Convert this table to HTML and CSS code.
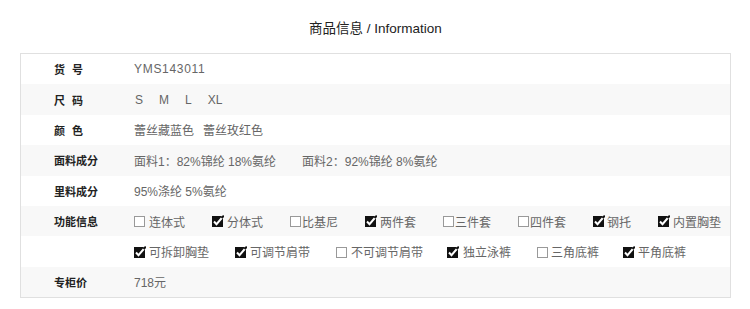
FILE: index.html
```html
<!DOCTYPE html>
<html lang="zh-CN">
<head>
<meta charset="utf-8">
<title>商品信息</title>
<link rel="stylesheet" href="styles.css">
</head>
<body>
<div class="page">
  <h1 class="title">商品信息 / Information</h1>
  <div class="table">
    <div class="row">
      <div class="label spaced">货 号</div>
      <div class="value code">YMS143011</div>
    </div>
    <div class="row alt">
      <div class="label spaced">尺 码</div>
      <div class="value sizes"><span>S</span><span>M</span><span>L</span><span>XL</span></div>
    </div>
    <div class="row">
      <div class="label spaced">颜 色</div>
      <div class="value pair"><span>蕾丝藏蓝色</span><span>蕾丝玫红色</span></div>
    </div>
    <div class="row alt">
      <div class="label">面料成分</div>
      <div class="value pair wide"><span>面料1：82%锦纶 18%氨纶</span><span>面料2：92%锦纶 8%氨纶</span></div>
    </div>
    <div class="row">
      <div class="label">里料成分</div>
      <div class="value">95%涤纶 5%氨纶</div>
    </div>
    <div class="row alt">
      <div class="label">功能信息</div>
      <div class="value checks">
        <span class="opt"><svg class="cb" viewBox="0 0 12 12"><rect x="0.5" y="1.5" width="10" height="10" fill="#fff" stroke="#999"/></svg><span class="t g13">连体式</span></span>
        <span class="opt"><svg class="cb" viewBox="0 0 12 12"><rect x="0" y="1" width="11" height="11" fill="#111"/><path d="M2 6.5 L4.5 9.2 L11.8 0.6" fill="none" stroke="#fff" stroke-width="2"/><path d="M9.6 3.2 L11.8 0.6" fill="none" stroke="#111" stroke-width="2"/></svg><span class="t g13">分体式</span></span>
        <span class="opt"><svg class="cb" viewBox="0 0 12 12"><rect x="0.5" y="1.5" width="10" height="10" fill="#fff" stroke="#999"/></svg><span class="t g10">比基尼</span></span>
        <span class="opt"><svg class="cb" viewBox="0 0 12 12"><rect x="0" y="1" width="11" height="11" fill="#111"/><path d="M2 6.5 L4.5 9.2 L11.8 0.6" fill="none" stroke="#fff" stroke-width="2"/><path d="M9.6 3.2 L11.8 0.6" fill="none" stroke="#111" stroke-width="2"/></svg><span class="t g13">两件套</span></span>
        <span class="opt"><svg class="cb" viewBox="0 0 12 12"><rect x="0.5" y="1.5" width="10" height="10" fill="#fff" stroke="#999"/></svg><span class="t g10">三件套</span></span>
        <span class="opt"><svg class="cb" viewBox="0 0 12 12"><rect x="0.5" y="1.5" width="10" height="10" fill="#fff" stroke="#999"/></svg><span class="t g10">四件套</span></span>
        <span class="opt"><svg class="cb" viewBox="0 0 12 12"><rect x="0" y="1" width="11" height="11" fill="#111"/><path d="M2 6.5 L4.5 9.2 L11.8 0.6" fill="none" stroke="#fff" stroke-width="2"/><path d="M9.6 3.2 L11.8 0.6" fill="none" stroke="#111" stroke-width="2"/></svg><span class="t g12">钢托</span></span>
        <span class="opt"><svg class="cb" viewBox="0 0 12 12"><rect x="0" y="1" width="11" height="11" fill="#111"/><path d="M2 6.5 L4.5 9.2 L11.8 0.6" fill="none" stroke="#fff" stroke-width="2"/><path d="M9.6 3.2 L11.8 0.6" fill="none" stroke="#111" stroke-width="2"/></svg><span class="t g13">内置胸垫</span></span>
      </div>
    </div>
    <div class="row">
      <div class="label"></div>
      <div class="value checks two">
        <span class="opt"><svg class="cb" viewBox="0 0 12 12"><rect x="0" y="1" width="11" height="11" fill="#111"/><path d="M2 6.5 L4.5 9.2 L11.8 0.6" fill="none" stroke="#fff" stroke-width="2"/><path d="M9.6 3.2 L11.8 0.6" fill="none" stroke="#111" stroke-width="2"/></svg><span class="t g13">可拆卸胸垫</span></span>
        <span class="opt"><svg class="cb" viewBox="0 0 12 12"><rect x="0" y="1" width="11" height="11" fill="#111"/><path d="M2 6.5 L4.5 9.2 L11.8 0.6" fill="none" stroke="#fff" stroke-width="2"/><path d="M9.6 3.2 L11.8 0.6" fill="none" stroke="#111" stroke-width="2"/></svg><span class="t g13">可调节肩带</span></span>
        <span class="opt"><svg class="cb" viewBox="0 0 12 12"><rect x="0.5" y="1.5" width="10" height="10" fill="#fff" stroke="#999"/></svg><span class="t g13">不可调节肩带</span></span>
        <span class="opt"><svg class="cb" viewBox="0 0 12 12"><rect x="0" y="1" width="11" height="11" fill="#111"/><path d="M2 6.5 L4.5 9.2 L11.8 0.6" fill="none" stroke="#fff" stroke-width="2"/><path d="M9.6 3.2 L11.8 0.6" fill="none" stroke="#111" stroke-width="2"/></svg><span class="t g15">独立泳裤</span></span>
        <span class="opt"><svg class="cb" viewBox="0 0 12 12"><rect x="0.5" y="1.5" width="10" height="10" fill="#fff" stroke="#999"/></svg><span class="t g12">三角底裤</span></span>
        <span class="opt"><svg class="cb" viewBox="0 0 12 12"><rect x="0" y="1" width="11" height="11" fill="#111"/><path d="M2 6.5 L4.5 9.2 L11.8 0.6" fill="none" stroke="#fff" stroke-width="2"/><path d="M9.6 3.2 L11.8 0.6" fill="none" stroke="#111" stroke-width="2"/></svg><span class="t g13">平角底裤</span></span>
      </div>
    </div>
    <div class="row alt">
      <div class="label">专柜价</div>
      <div class="value">718元</div>
    </div>
  </div>
</div>
</body>
</html>
```

FILE: styles.css
```css
html, body {
  margin: 0;
  padding: 0;
  background: #fff;
}

body {
  font-family: "Liberation Sans", "Noto Sans CJK SC", sans-serif;
  color: #333;
}

.page {
  width: 750px;
  padding: 0 19px 0 20px;
  box-sizing: border-box;
}

.title {
  margin: 0;
  padding-top: 20px;
  height: 53px;
  box-sizing: border-box;
  font-size: 13.5px;
  font-weight: normal;
  line-height: 18px;
  text-align: center;
  color: #222;
}

.table {
  border: 1px solid #e0e0e0;
}

.row {
  display: flex;
  align-items: center;
  height: 30.4px;
}

.row.alt {
  background: #f8f8f8;
}

.label {
  width: 80px;
  padding-left: 33px;
  flex: none;
  font-size: 11px;
  font-weight: bold;
  color: #222;
}

.label.spaced {
  word-spacing: 4px;
}

.value {
  font-size: 12px;
  color: #666;
  display: flex;
  align-items: center;
}

.code {
  letter-spacing: 0.7px;
}

.sizes {
  gap: 16px;
  padding-left: 1px;
}

.pair {
  gap: 9px;
}

.pair.wide {
  gap: 26px;
}

.checks {
  gap: 27px;
}

.checks.two {
  gap: 26px;
}

.checks.two .opt:nth-child(3) {
  margin-right: -2px;
}

.checks.two .opt:nth-child(5) {
  margin-right: -2px;
}

.opt {
  display: flex;
  align-items: center;
}

.cb {
  width: 12px;
  height: 12px;
  flex: none;
  display: block;
}

.t {
  margin-left: 3px;
}

.g10 { margin-left: 0; }
.g12 { margin-left: 2px; }
.g13 { margin-left: 3px; }
.g15 { margin-left: 4px; }
```
